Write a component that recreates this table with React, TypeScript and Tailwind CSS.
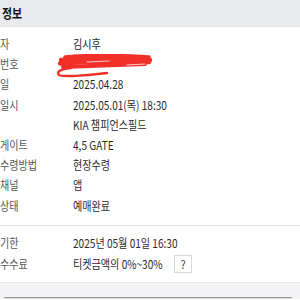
const rowsTop: [string, string][] = [
  ['자', '김시후'],
  ['번호', ''],
  ['일', '2025.04.28'],
  ['일시', '2025.05.01(목) 18:30'],
  ['', 'KIA 챔피언스필드'],
  ['게이트', '4,5 GATE'],
  ['수령방법', '현장수령'],
  ['채널', '앱'],
  ['상태', '예매완료'],
];

function Scribble() {
  return (
    <svg className="absolute left-[-18px] top-[-10px]" width="98" height="24" viewBox="0 0 98 24">
      <g fill="none" stroke="#f2302a" strokeLinecap="round" strokeLinejoin="round">
        <path d="M10 3 C32 1 64 1 94 3" strokeWidth="3.5" />
        <path d="M6 6 C32 4 64 4 95 6" strokeWidth="4.5" />
        <path d="M5 9.5 C32 8 64 7 94 8" strokeWidth="4.5" />
        <path d="M8 13 C34 12 62 11 90 10" strokeWidth="4" />
        <path d="M16 14 C5 15 1 18 4 21 C8 23 30 22 52 19" strokeWidth="2.4" />
        <path d="M32 8 C38 8 46 7 54 7" stroke="#fff2f2" strokeWidth="0.8" />
        <path d="M72 11 C78 11 84 10 90 10" stroke="#fff2f2" strokeWidth="0.8" />
      </g>
    </svg>
  );
}

function T({ children, className = '' }: { children: React.ReactNode; className?: string }) {
  return (
    <span className={`inline-block origin-left scale-x-[0.84] whitespace-nowrap ${className}`}>{children}</span>
  );
}

function Row({ label, value, masked }: { label: string; value: string; masked?: boolean }) {
  return (
    <div className="flex items-center h-[20.2px]">
      <div className="w-[73px] shrink-0 text-[#555]">
        <T>{label}</T>
      </div>
      <div className="relative text-[#2a2a2a]">{masked ? <Scribble /> : <T>{value}</T>}</div>
    </div>
  );
}

export default function App() {
  return (
    <div
      className="w-[300px] h-[300px] overflow-hidden bg-white text-[12px]"
      style={{ fontFamily: '"Noto Sans CJK KR", "Noto Sans", sans-serif' }}
    >
      {/* header */}
      <div className="h-[27px] bg-[#e9eaee] border-b border-[#e2e3e7] flex items-center pl-[2px]">
        <T className="font-bold text-[13px] text-[#111]">정보</T>
      </div>

      {/* booking details */}
      <div className="pt-[7px] pb-[9px] border-b border-[#e6e6e6]">
        {rowsTop.map(([l, v], i) => (
          <Row key={i} label={l} value={v} masked={i === 1} />
        ))}
      </div>

      {/* cancel info */}
      <div className="pt-[7px] pb-[7px] border-b border-[#e6e6e6]">
        <div className="flex items-center h-[21px]">
          <div className="w-[73px] shrink-0 text-[#555]">
            <T>기한</T>
          </div>
          <div className="text-[#2a2a2a]">
            <T>2025년 05월 01일 16:30</T>
          </div>
        </div>
        <div className="flex items-center h-[21px]">
          <div className="w-[73px] shrink-0 text-[#555]">
            <T>수수료</T>
          </div>
          <div className="w-[101px] shrink-0 text-[#2a2a2a]">
            <T>티켓금액의 0%~30%</T>
          </div>
          <div className="w-[18px] h-[18px] border border-[#d9d9d9] flex items-center justify-center text-[11px] text-[#444]">
            ?
          </div>
        </div>
      </div>

      <div className="h-[16px] bg-[#f4f4f6] flex flex-col justify-end">
        <div className="mx-[4px] w-[288px] h-[2px] border-t border-[#9a9a9a] bg-[#dcdcdc]" />
      </div>
    </div>
  );
}
